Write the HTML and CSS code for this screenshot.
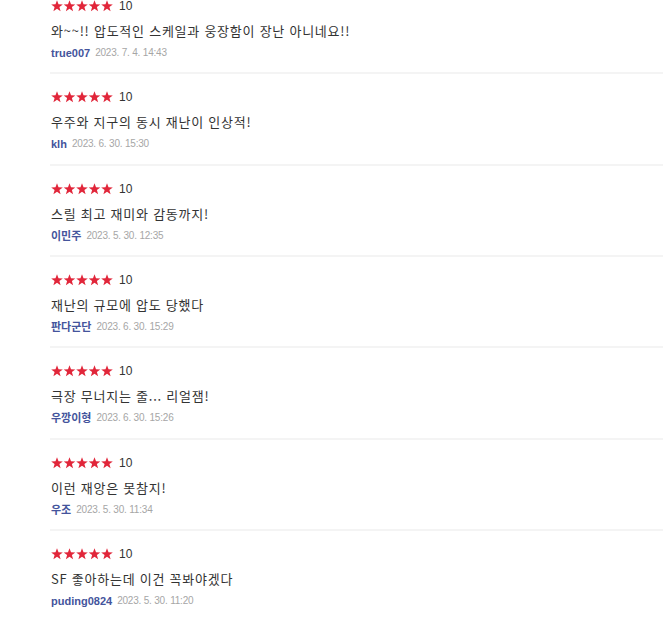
FILE: index.html
```html
<!DOCTYPE html>
<html lang="ko">
<head>
<meta charset="utf-8">
<link rel="stylesheet" href="styles.css">
</head>
<body>
<svg width="0" height="0" class="defs">
  <defs>
    <path id="star" d="M6 0.3 L7.5 4.3 L11.8 4.4 L8.4 7.05 L9.6 11.3 L6 8.8 L2.4 11.3 L3.6 7.05 L0.2 4.4 L4.5 4.3 Z"/>
  </defs>
</svg>
<ul class="reviews">
  <li class="review">
    <div class="rating"><svg class="stars" width="63" height="12" viewBox="0 0 63 12"><use href="#star" x="0"/><use href="#star" x="12.5"/><use href="#star" x="25"/><use href="#star" x="37.5"/><use href="#star" x="50"/></svg><span class="score">10</span></div>
    <p class="text">와~~!! 압도적인 스케일과 웅장함이 장난 아니네요!!</p>
    <div class="meta"><span class="author">true007</span><span class="date">2023. 7. 4. 14:43</span></div>
  </li>
  <li class="review">
    <div class="rating"><svg class="stars" width="63" height="12" viewBox="0 0 63 12"><use href="#star" x="0"/><use href="#star" x="12.5"/><use href="#star" x="25"/><use href="#star" x="37.5"/><use href="#star" x="50"/></svg><span class="score">10</span></div>
    <p class="text">우주와 지구의 동시 재난이 인상적!</p>
    <div class="meta"><span class="author">klh</span><span class="date">2023. 6. 30. 15:30</span></div>
  </li>
  <li class="review">
    <div class="rating"><svg class="stars" width="63" height="12" viewBox="0 0 63 12"><use href="#star" x="0"/><use href="#star" x="12.5"/><use href="#star" x="25"/><use href="#star" x="37.5"/><use href="#star" x="50"/></svg><span class="score">10</span></div>
    <p class="text">스릴 최고 재미와 감동까지!</p>
    <div class="meta"><span class="author">이민주</span><span class="date">2023. 5. 30. 12:35</span></div>
  </li>
  <li class="review">
    <div class="rating"><svg class="stars" width="63" height="12" viewBox="0 0 63 12"><use href="#star" x="0"/><use href="#star" x="12.5"/><use href="#star" x="25"/><use href="#star" x="37.5"/><use href="#star" x="50"/></svg><span class="score">10</span></div>
    <p class="text">재난의 규모에 압도 당했다</p>
    <div class="meta"><span class="author">판다군단</span><span class="date">2023. 6. 30. 15:29</span></div>
  </li>
  <li class="review">
    <div class="rating"><svg class="stars" width="63" height="12" viewBox="0 0 63 12"><use href="#star" x="0"/><use href="#star" x="12.5"/><use href="#star" x="25"/><use href="#star" x="37.5"/><use href="#star" x="50"/></svg><span class="score">10</span></div>
    <p class="text">극장 무너지는 줄... 리얼잼!</p>
    <div class="meta"><span class="author">우깡이형</span><span class="date">2023. 6. 30. 15:26</span></div>
  </li>
  <li class="review">
    <div class="rating"><svg class="stars" width="63" height="12" viewBox="0 0 63 12"><use href="#star" x="0"/><use href="#star" x="12.5"/><use href="#star" x="25"/><use href="#star" x="37.5"/><use href="#star" x="50"/></svg><span class="score">10</span></div>
    <p class="text">이런 재앙은 못참지!</p>
    <div class="meta"><span class="author">우조</span><span class="date">2023. 5. 30. 11:34</span></div>
  </li>
  <li class="review">
    <div class="rating"><svg class="stars" width="63" height="12" viewBox="0 0 63 12"><use href="#star" x="0"/><use href="#star" x="12.5"/><use href="#star" x="25"/><use href="#star" x="37.5"/><use href="#star" x="50"/></svg><span class="score">10</span></div>
    <p class="text">SF 좋아하는데 이건 꼭봐야겠다</p>
    <div class="meta"><span class="author">puding0824</span><span class="date">2023. 5. 30. 11:20</span></div>
  </li>
</ul>
</body>
</html>
```
FILE: styles.css
```css
html, body {
  margin: 0;
  padding: 0;
  background: #fff;
  overflow: hidden;
}
body {
  font-family: "Liberation Sans", "Noto Sans CJK KR", sans-serif;
  color: #333;
}
.defs {
  position: absolute;
  width: 0;
  height: 0;
}
.reviews {
  list-style: none;
  margin: -17px 0 0 50px;
  padding: 0;
}
.review {
  padding: 16px 0 11.33px 1px;
  border-bottom: 2px solid #f4f4f4;
}
.review:last-child {
  border-bottom: none;
}
.rating {
  display: flex;
  align-items: center;
  height: 14px;
}
.stars {
  fill: #e1263a;
  display: block;
}
.score {
  margin-left: 5px;
  font-size: 12px;
  color: #333;
  line-height: 14px;
}
.text {
  margin: 8px 0 0;
  height: 20px;
  line-height: 20px;
  font-family: "Noto Sans CJK KR", "Liberation Sans", sans-serif;
  font-size: 13px;
  letter-spacing: 0.75px;
  color: #333;
}
.meta {
  margin-top: 4px;
  height: 16px;
  line-height: 16px;
  display: flex;
  align-items: center;
}
.author {
  font-family: "Liberation Sans", "Noto Sans CJK KR", sans-serif;
  font-size: 11px;
  font-weight: bold;
  color: #44549c;
}
.date {
  margin-left: 5px;
  font-size: 10px;
  letter-spacing: -0.2px;
  color: #a6a6a6;
}
```
